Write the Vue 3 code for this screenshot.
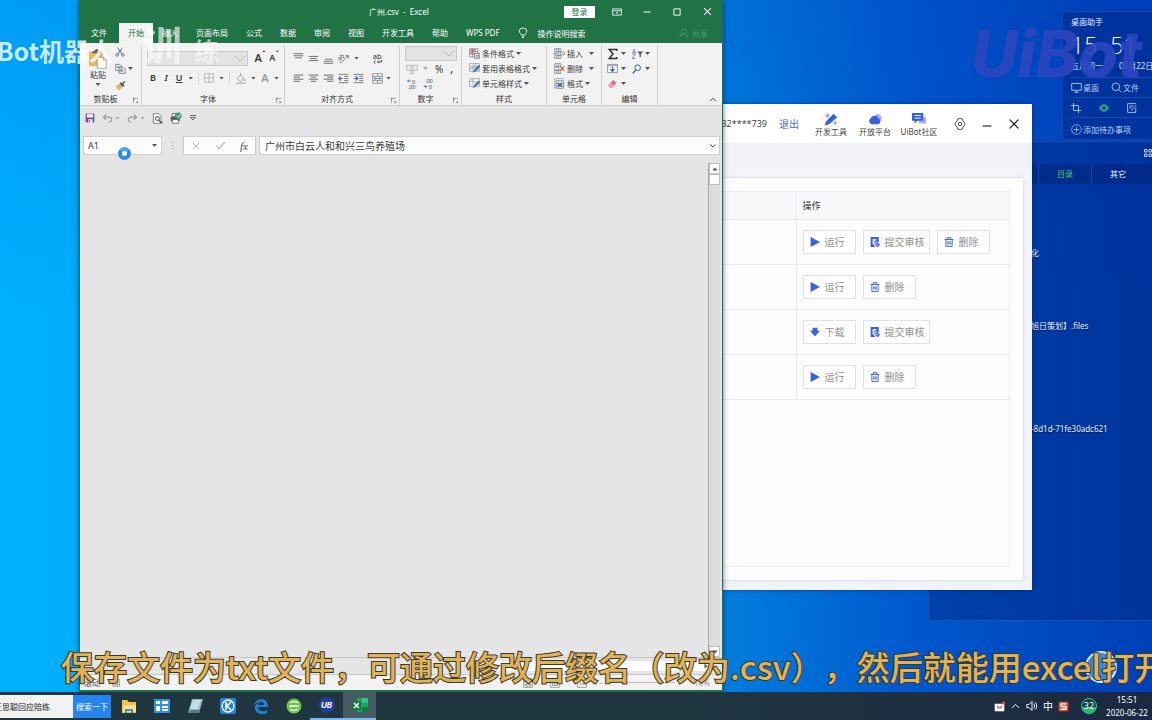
<script setup>
import { h, ref } from 'vue'

const glyphs = {
  cut: '<g fill="none" stroke="#4a5a6a" stroke-width="1.4"><path d="M4 1l7 10M12 1L5 11"/><circle cx="3.5" cy="12.5" r="2.2" stroke="#3d6aa0"/><circle cx="12.5" cy="12.5" r="2.2" stroke="#3d6aa0"/></g>',
  copy: '<g fill="#f4f4f4" stroke="#6a7785" stroke-width="1.2"><path d="M1 2h6l2 2v7H1zM6 6h6l3 3v6H6z"/><path d="M3 5h3M3 7h3M8 10h4M8 12h4"/></g>',
  brush: '<path d="M1 9l6-4 4 4-4 6c-2-1-5-3-6-6z" fill="#e0b060"/><path d="M7 5l2-2 5 5-3 2zM11 4l3-3 1 1-3 4z" fill="#555"/>',
  paste: '<rect x="1" y="4" width="20" height="21" fill="#e5b85c"/><path d="M6 6V3h3a3 3 0 0 1 6 0h3v3z" fill="#666"/><path d="M13 12h9l4 4v12H13z" fill="#fff" stroke="#888"/><path d="M22 12v4h4" fill="none" stroke="#888"/>',
  border: '<path d="M1 1h14v14H1zM8 1v14M1 8h14" fill="none" stroke="#aaa" stroke-width="1.2"/>',
  bucket: '<path d="M3 8l5-5 5 5-5 5zM8 3V0M13 8c2 2 2 4 1 4" fill="none" stroke="#999" stroke-width="1.3"/><path d="M1 14h14v2H1z" fill="#bbb"/>',
  top: '<path d="M1 1h14M1 4h14M3 7h10" stroke="#666" stroke-width="1.3"/>',
  middle: '<path d="M1 5h14M3 8h10M1 11h14" stroke="#666" stroke-width="1.3"/>',
  bottom: '<path d="M3 9h10M1 12h14M1 15h14" stroke="#666" stroke-width="1.3"/>',
  left: '<path d="M1 3h14M1 6h9M1 9h14M1 12h9" stroke="#555" stroke-width="1.2"/>',
  center: '<path d="M1 3h14M4 6h8M1 9h14M4 12h8" stroke="#555" stroke-width="1.2"/>',
  right: '<path d="M1 3h14M6 6h9M1 9h14M6 12h9" stroke="#555" stroke-width="1.2"/>',
  outdent: '<path d="M1 2h14M9 5h6M9 8h6M9 11h6M1 14h14" stroke="#666" stroke-width="1.2"/><path d="M7 8H1M4 5L1 8l3 3" fill="none" stroke="#2f6cb5" stroke-width="1.6"/>',
  indent: '<path d="M1 2h14M9 5h6M9 8h6M9 11h6M1 14h14" stroke="#666" stroke-width="1.2"/><path d="M1 8h6M4 5l3 3-3 3" fill="none" stroke="#2f6cb5" stroke-width="1.6"/>',
  orient: '<path d="M3 15L15 4M11 4h4v4" fill="none" stroke="#666" stroke-width="1.3"/><text x="0" y="9" font-size="9" fill="#444" transform="rotate(-35 5 8)">ab</text>',
  wrap: '<text x="1" y="8" font-size="11" fill="#333">ab</text><path d="M5 11a2 2 0 0 0 0 4M14 10v3H8M10 11l-2 2 2 2" fill="none" stroke="#444" stroke-width="1.3"/>',
  merge: '<path d="M1 1h14v14H1zM1 5h14M1 11h14M8 1v4M8 11v4" fill="none" stroke="#777"/><path d="M3 8h10M5 6L3 8l2 2M11 6l2 2-2 2" fill="none" stroke="#2f6cb5"/>',
  money: '<path d="M1 3h14v7H1z" fill="#eee" stroke="#aaa"/><circle cx="8" cy="6.500" r="2" fill="none" stroke="#aaa"/><path d="M5 12h6M5 14h6" stroke="#bbb" stroke-width="1.5"/>',
  decUp: '<path d="M6 3H1M3 1L1 3l2 2" fill="none" stroke="#2f6cb5" stroke-width="1.4"/><text x="8" y="8" font-size="9" fill="#444">0</text><text x="1" y="16" font-size="9" fill="#444">.00</text>',
  decDown: '<path d="M1 12h5M4 10l2 2-2 2" fill="none" stroke="#2f6cb5" stroke-width="1.4"/><text x="3" y="7" font-size="9" fill="#444">.00</text><text x="9" y="16" font-size="9" fill="#444">0</text>',
  cond: '<path d="M1 1h12v12H1zM1 5h12M1 9h12M5 1v12M9 1v12" fill="#fff" stroke="#777"/><path d="M2 2h7v2H2zM2 6h5v2H2z" fill="#c94c4c"/><path d="M8 8h7v7H8z" fill="#fff" stroke="#555"/><path d="M10 11h4M10 13h4" stroke="#555"/>',
  tableFmt: '<path d="M1 1h14v11H1zM1 5h14M1 8h14M6 1v11M10 1v11" fill="#fff" stroke="#7c8794"/><path d="M6 5h9v7H6z" fill="#a9c4e4"/><path d="M5 14l3-4 6-7 2 2-7 7z" fill="#35618f"/>',
  cellStyle: '<path d="M1 1h14v11H1zM1 5h14M6 1v11" fill="#fff" stroke="#7c8794"/><path d="M6 5h8v5H6z" fill="#c8d8ea"/><path d="M5 15l3-4 6-7 2 2-7 7z" fill="#35618f"/>',
  cellIns: '<path d="M1 1h9v4H1zM1 11h9v4H1zM4 1v4M7 1v4M4 11v4M7 11v4M6 6h9v4H6zM10 6v4" fill="#fff" stroke="#69717b"/><path d="M5 8H0M2 6L0 8l2 2" fill="none" stroke="#2f6cb5"/>',
  cellDel: '<path d="M1 1h9v4H1zM1 11h9v4H1zM4 1v4M7 1v4M4 11v4M7 11v4M1 6h6v4H1z" fill="#fff" stroke="#69717b"/><path d="M9 5l6 6M15 5l-6 6" stroke="#c8502e" stroke-width="1.7"/>',
  cellFmt: '<path d="M3 4h11v11H3zM3 8h11M3 12h11M6 4v11M11 4v11" fill="#fff" stroke="#69717b"/><path d="M6 8h5v4H6z" fill="#2f6cb5"/><path d="M1 1v14M3 1h12" stroke="#2f6cb5" stroke-dasharray="2 1"/>',
  sum: '<path d="M13 4V2H3l5 6-5 6h10v-2" fill="none" stroke="#333" stroke-width="2"/>',
  fill: '<path d="M1 2h14v12H1zM1 4h14" fill="#fff" stroke="#666"/><path d="M8 5v7M5 9l3 3 3-3" fill="none" stroke="#2f6cb5" stroke-width="2"/>',
  eraser: '<path d="M2 10l7-7 5 4-7 7H4z" fill="#e0738a"/><path d="M2 10l3-3 5 4-3 3H4z" fill="#f0a3b2"/>',
  sort: '<text x="0" y="8" font-size="9" fill="#2f5fa8">A</text><text x="0" y="16" font-size="9" fill="#8a3fa0">Z</text><path d="M8 5h8l-3 4v4h-2V9z" fill="#555"/>',
  find: '<circle cx="9" cy="6" r="4.500" fill="none" stroke="#2f5f98" stroke-width="1.6"/><path d="M6 10l-5 5" stroke="#2f5f98" stroke-width="2"/>',
  launcher: '<path d="M1 5V1h4M1 14V1h13M7 7l6 6M13 8v5H8" fill="none" stroke="#666" stroke-width="1.4"/>',
  save: '<path d="M1 1h14v14H1z" fill="#7d4a96"/><path d="M3 2h10v5H3zM5 10h7v5H5z" fill="#f2eef5"/><path d="M6 11h2v3H6z" fill="#7d4a96"/>',
  undo: '<path d="M6 2L2 6l4 4M2 6h8c6 0 5 7 0 7" fill="none" stroke="#9c9c9c" stroke-width="1.7"/>',
  redo: '<path d="M10 2l4 4-4 4M14 6H6c-6 0-5 7 0 7" fill="none" stroke="#9c9c9c" stroke-width="1.7"/>',
  preview: '<path d="M2 1h8l3 3v11H2z" fill="#fff" stroke="#555"/><circle cx="8" cy="8" r="3" fill="#e8eef5" stroke="#444" stroke-width="1.3"/><path d="M10 11l5 4" stroke="#444" stroke-width="2"/>',
  print: '<path d="M1 6h12v6H1z" fill="#556"/><path d="M3 2h8v4H3zM3 10h8v5H3z" fill="#fff" stroke="#556"/><circle cx="11" cy="5" r="4.500" fill="#3f9a6c"/><path d="M9 5l2 2 3-4" fill="none" stroke="#fff" stroke-width="1.3"/>',
  more: '<path d="M2 3h12" stroke="#444" stroke-width="1.600"/><path d="M3 7h10l-5 5z" fill="none" stroke="#444" stroke-width="1.500"/>',
  cross: '<path d="M3 3l10 10M13 3L3 13" stroke="currentColor" stroke-width="1.5"/>',
  check: '<path d="M2 8l4 5 8-10" fill="none" stroke="#b0b0b0" stroke-width="1.6"/>',
  bulb: '<path d="M5 11c0-2-3-3-3-6a6 5 0 0 1 12 0c0 3-3 4-3 6zM6 13h4M6 15h4" fill="none" stroke="#fff" stroke-width="1.300"/>',
  person: '<circle cx="8" cy="6" r="4" fill="none" stroke="currentColor" stroke-width="1.4"/><path d="M1 15c0-3 3-5 6-5M11 13h4M13 11v4" fill="none" stroke="currentColor" stroke-width="1.4"/>',
  ribbonOpt: '<path d="M1 3h14v10H1zM1 6h14" fill="none" stroke="#fff" stroke-width="1.300"/><path d="M8 12V8M6 10l2-2 2 2" fill="none" stroke="#fff"/>',
  minus: '<path d="M2 8h12" stroke="currentColor" stroke-width="1.500"/>',
  box: '<path d="M3 3h10v10H3z" fill="none" stroke="#fff" stroke-width="1.500"/>',
  up: '<path d="M3 10l5-5 5 5" fill="none" stroke="currentColor" stroke-width="1.400"/>',
  down: '<path d="M3 5l5 5 5-5" fill="none" stroke="currentColor" stroke-width="1.800"/>',
  triUp: '<path d="M3 11l5-6 5 6z" fill="#555"/>',
  triDown: '<path d="M3 5l5 6 5-6z" fill="#555"/>',
  triRight: '<path d="M5 3l6 5-6 5z" fill="#555"/>',
  grid: '<path d="M1 1h14v14H1zM1 6h14M1 11h14M6 1v14M11 1v14" fill="none" stroke="#777"/>',
  page: '<path d="M1 1h14v14H1zM4 4h8v8H4zM6 6h4M6 8h4M6 10h4" fill="none" stroke="#777"/>',
  pageBreak: '<path d="M1 1h14v14H1zM5 1v9h6V1" fill="none" stroke="#777"/>',
  tools: '<path d="M1 15l1-4 9-9 4 4-9 8z" fill="#3a62d8"/><path d="M1 4l3-3 3 3-3 3zM10 12l3-2 2 3-2 2z" fill="#9fb5f3"/>',
  cloud: '<path d="M8 4a4 4 0 0 1 7 1c2 4 0 6-3 6z" fill="#9fb5f3"/><path d="M4 14a4 4 0 0 1-1-7 5 5 0 0 1 9 0 4 4 0 0 1 0 7z" fill="#3a62d8"/>',
  chat: '<path d="M10 6h6v8l-2-1H8v-3z" fill="#9fb5f3"/><path d="M0 1h13v9H6l-3 3v-3H0z" fill="#3a62d8"/><path d="M3 4h7M3 7h7" stroke="#fff"/>',
  gear: '<path d="M5 1h6l1 3 3 4-3 4-1 3H5l-1-3-3-4 3-4z" fill="none" stroke="#555" stroke-width="1.300" stroke-linejoin="round"/><circle cx="8" cy="8" r="2.500" fill="none" stroke="#555" stroke-width="1.300"/>',
  play: '<path d="M1 0l15 8-15 8z" fill="#3a62e0"/>',
  download: '<path d="M4 1h8v5h4l-8 9-8-9h4z" fill="#3a62e0"/>',
  submit: '<path d="M1 0h13v8a4 4 0 0 0-5 8H1z" fill="#3a62c8"/><path d="M4 3h7L7 8v4H4z" fill="#cfdcfa"/><circle cx="12" cy="12" r="3.500" fill="#3a62c8"/><path d="M10 12l2 1 2-3" fill="none" stroke="#fff"/>',
  trash: '<path d="M1 4h14M5 4V1h6v3M3 4v11h10V4M6 7v5M8 7v5M10 7v5" fill="none" stroke="#3a62c8" stroke-width="1.500"/>',
  monitor: '<path d="M1 2h14v10H1zM5 15h6M8 12v3" fill="none" stroke="currentColor" stroke-width="1.300"/>',
  search: '<circle cx="7" cy="7" r="5.500" fill="none" stroke="currentColor" stroke-width="1.300"/><path d="M11 11l4 4" stroke="currentColor" stroke-width="1.400"/>',
  crop: '<path d="M4 0v12h12M0 4h12v12" fill="none" stroke="currentColor" stroke-width="1.400"/>',
  eye: '<path d="M0 8c4-8 12-8 16 0-4 8-12 8-16 0z" fill="#2f9d87"/><circle cx="8" cy="8" r="2.500" fill="#0a3f96"/>',
  note: '<path d="M14 8v7H1V1h13M4 5h6M4 8h3M7 12l8-9" fill="none" stroke="currentColor" stroke-width="1.400"/>',
  plus: '<circle cx="8" cy="8" r="7" fill="none" stroke="currentColor"/><path d="M4 8h8M8 4v8" stroke="currentColor"/>',
  tiles: '<path d="M1 1h5v5H1zM10 1h5v5h-5zM1 10h5v5H1zM10 10h5v5h-5z" fill="none" stroke="#d8e4ff" stroke-width="1.800"/>',
  folder: '<path d="M1 2h5l2 2h7v11H1z" fill="#f3c14b"/><path d="M2 7h13v7H2z" fill="#ffe08a"/><path d="M4 11h8v4h-2v-2H6v2H4z" fill="#3b93d6"/>',
  list: '<path d="M0 1h16v14H0z" fill="#2b95e6"/><path d="M2 3h4v3H2zM8 3h6v3H8zM2 8h4v5H2zM8 8h6v2H8zM8 11h6v2H8z" fill="#fff"/>',
  book: '<path d="M5 1h11l-4 14H1z" fill="#8fb6bd"/><path d="M6 2h8l-3 9H3z" fill="#c5dde0"/><path d="M1 15l3-3h9l-1 3z" fill="#557c86"/>',
  kugou: '<rect width="16" height="16" rx="2" fill="#2383d8"/><circle cx="8" cy="8" r="6" fill="none" stroke="#fff" stroke-width="1.300"/><path d="M6 4v8M11 4L7 8l4 4" fill="none" stroke="#fff" stroke-width="1.600"/>',
  edge: '<path d="M1 8C2-1 15-1 15 8v1H5c0 5 6 5 9 3v3C7 18 1 14 2 9c1-3 3-5 6-5-2 1-3 2-3 3h6c0-5-8-4-10 1z" fill="#1e82d6"/>',
  green: '<circle cx="8" cy="8" r="7.500" fill="#6cc644"/><path d="M3 8h10M4 5c2-2 6-2 8 0M4 11c2 2 6 2 8 0" fill="none" stroke="#fff" stroke-width="1.600"/>',
  excel: '<path d="M5 1h11v14H5z" fill="#21a366"/><path d="M10 1h6v5h-6z" fill="#33c481"/><path d="M10 10h6v5h-6z" fill="#107c41"/><path d="M0 4h9v9H0z" fill="#107c41"/><path d="M2 6l5 5M7 6l-5 5" stroke="#fff" stroke-width="1.500"/>',
  bag: '<path d="M1 4h14v11H1z" fill="#fff"/><path d="M12 1h4v4h-4z" fill="#e5473c"/><path d="M5 7c0 4 6 4 6 0" fill="none" stroke="#e5473c" stroke-width="1.600"/>',
  sound: '<path d="M1 6h3l4-4v12l-4-4H1zM10 5c2 2 2 4 0 6M12 3c3 3 3 7 0 10" fill="none" stroke="#fff" stroke-width="1.200"/>',
  sogou: '<rect x="1" y="1" width="14" height="14" rx="2" fill="#e8512e"/><path d="M12 4H6c-3 0-2 4 0 4h4c3 0 2 4 0 4H4" fill="none" stroke="#fff" stroke-width="2"/>',
}
const Icon = (p) =>
  h('svg', { viewBox: p.box || '0 0 16 16', innerHTML: glyphs[p.n], 'aria-hidden': 'true' })
Icon.props = ['n', 'box']

const tabs = ['文件', '开始', '插入', '页面布局', '公式', '数据', '审阅', '视图', '开发工具', '帮助', 'WPS PDF']
const styleItems = [['cond', '条件格式'], ['tableFmt', '套用表格格式'], ['cellStyle', '单元格样式']]
const cellItems = [['cellIns', '插入'], ['cellDel', '删除'], ['cellFmt', '格式']]
const run = ['play', '运行']
const del = ['trash', '删除']
const sub = ['submit', '提交审核']
const rows = [[run, sub, del], [run, del], [['download', '下载'], sub], [run, del]]
const apps = ['folder', 'list', 'book', 'kugou', 'edge', 'green']
const cell = ref('A1')
const formula = ref('广州市白云人和和兴三鸟养殖场')
const query = ref('王思聪回应陪练')
</script>

<template>
  <div class="screen">
    <main class="desktop">
      <aside class="panel">
        <div class="panel-top"><Icon n="tiles" class="i8" /></div>
        <nav class="panel-tabs"><a href="#" class="on">目录</a><a href="#">其它</a></nav>
        <ul class="files">
          <li>化</li>
          <li>旭日策划】.files</li>
          <li>-8d1d-71fe30adc621</li>
        </ul>
      </aside>

      <aside class="helper">
        <h2>桌面助手</h2>
        <div class="clock"><span>15</span><span>51</span></div>
        <div class="date"><span>五月初一</span><span>06月22日</span></div>
        <div class="tools"><a href="#"><Icon n="monitor" class="i11" />桌面</a><a href="#"><Icon n="search" class="i11" />文件</a></div>
        <div class="tools icons"><Icon n="crop" class="i10" /><Icon n="eye" class="i10" /><Icon n="note" class="i10" /></div>
        <a href="#" class="todo"><Icon n="plus" class="i11" />添加待办事项</a>
      </aside>

      <div class="brand">UiBot</div>

      <section class="uibot">
        <header>
          <span class="phone">132****739</span>
          <a href="#" class="logout">退出</a>
          <a href="#" class="link"><Icon n="tools" class="i14" />开发工具</a>
          <a href="#" class="link"><Icon n="cloud" class="i14" />开放平台</a>
          <a href="#" class="link"><Icon n="chat" class="i14" />UiBot社区</a>
          <button class="wb" aria-label="设置"><Icon n="gear" class="i12" /></button>
          <button class="wb low" aria-label="最小化"><Icon n="minus" class="i12" /></button>
          <button class="wb" aria-label="关闭"><Icon n="cross" class="i14" /></button>
        </header>
        <div class="card">
          <div class="frame">
            <table>
              <thead><tr><th></th><th class="op">操作</th></tr></thead>
              <tbody>
                <tr v-for="(r, i) in rows" :key="i">
                  <td></td>
                  <td class="op"><div class="acts"><button v-for="a in r" :key="a[1]" :class="{ wide: a[1].length > 2 }"><Icon :n="a[0]" class="i10" />{{ a[1] }}</button></div></td>
                </tr>
              </tbody>
            </table>
          </div>
        </div>
      </section>

      <section class="excel">
        <header class="title">
          <h1>广州.csv&nbsp; -&nbsp; Excel</h1>
          <button class="login">登录</button>
          <button class="tb" aria-label="功能区选项"><Icon n="ribbonOpt" class="i10" /></button>
          <button class="tb" aria-label="最小化"><Icon n="minus" class="i10" /></button>
          <button class="tb" aria-label="最大化"><Icon n="box" class="i10" /></button>
          <button class="tb" aria-label="关闭"><Icon n="cross" class="i11" /></button>
        </header>
        <nav class="tabs">
          <a v-for="t in tabs" :key="t" href="#" :class="{ on: t === '开始' }">{{ t }}</a>
          <a href="#" class="tell"><Icon n="bulb" class="i10" />操作说明搜索</a>
          <a href="#" class="share"><Icon n="person" class="i10" />共享</a>
        </nav>
        <div class="ribbon">
          <div class="group">
            <div class="gb clip">
              <button class="paste"><Icon n="paste" box="0 0 28 29" class="i20" />粘贴<i class="caret"></i></button>
              <div class="col"><Icon n="cut" class="i10" /><span class="pair"><Icon n="copy" class="i11" /><i class="caret"></i></span><Icon n="brush" class="i11" /></div>
            </div>
            <div class="gl">剪贴板<Icon n="launcher" class="launch" /></div>
          </div>
          <div class="group">
            <div class="gb two">
              <div class="line"><select class="fname" aria-label="字体"><option></option></select><select class="fsize" aria-label="字号"><option></option></select><b class="big">A<sup>ˆ</sup></b><b class="small">A<sup>ˇ</sup></b></div>
              <div class="line fmt"><b>B</b><b class="it">I</b><b class="un">U</b><i class="caret"></i><s></s><Icon n="border" class="i10" /><i class="caret"></i><s></s><Icon n="bucket" class="i11" /><i class="caret"></i><b class="grey">A</b><i class="caret"></i></div>
            </div>
            <div class="gl">字体<Icon n="launcher" class="launch" /></div>
          </div>
          <div class="group">
            <div class="gb align">
              <Icon n="top" class="i11" /><Icon n="middle" class="i11" /><Icon n="bottom" class="i11" /><Icon n="orient" class="i11" /><i class="caret"></i><Icon n="wrap" class="i11" /><i></i>
              <Icon n="left" class="i11" /><Icon n="center" class="i11" /><Icon n="right" class="i11" /><Icon n="outdent" class="i11" /><Icon n="indent" class="i11" /><Icon n="merge" class="i11" /><i class="caret"></i>
            </div>
            <div class="gl">对齐方式<Icon n="launcher" class="launch" /></div>
          </div>
          <div class="group">
            <div class="gb num">
              <select class="nfmt" aria-label="数字格式"><option></option></select>
              <div class="line"><Icon n="money" class="i12" /><i class="caret pale"></i><span class="pct">%</span><b>,</b></div>
              <div class="line dec"><Icon n="decUp" class="i10" /><Icon n="decDown" class="i10" /></div>
            </div>
            <div class="gl">数字<Icon n="launcher" class="launch" /></div>
          </div>
          <div class="group">
            <div class="gb list"><button v-for="s in styleItems" :key="s[1]"><Icon :n="s[0]" class="i11" />{{ s[1] }}<i class="caret"></i></button></div>
            <div class="gl plain">样式</div>
          </div>
          <div class="group">
            <div class="gb list cells"><button v-for="s in cellItems" :key="s[1]"><Icon :n="s[0]" class="i11" />{{ s[1] }}<i class="caret"></i></button></div>
            <div class="gl plain">单元格</div>
          </div>
          <div class="group">
            <div class="gb edit"><Icon n="sum" class="i12" /><i class="caret"></i><Icon n="sort" class="i11" /><i class="caret"></i><Icon n="fill" class="i11" /><i class="caret"></i><Icon n="find" class="i10" /><i class="caret"></i><Icon n="eraser" class="i11" /><i class="caret"></i></div>
            <div class="gl plain">编辑</div>
          </div>
          <div class="group last"><button aria-label="折叠功能区"><Icon n="up" class="i10" /></button></div>
        </div>
        <div class="quick">
          <Icon n="save" class="i10" /><span class="pair"><Icon n="undo" class="i11" /><i class="caret pale"></i></span><span class="pair"><Icon n="redo" class="i11" /><i class="caret pale"></i></span><Icon n="preview" class="i11" /><Icon n="print" class="i12" /><Icon n="more" class="i8" />
        </div>
        <div class="fbar">
          <label class="name"><input v-model="cell" aria-label="名称框" /><i class="caret"></i></label>
          <span class="dots">⋮</span>
          <div class="fx"><Icon n="cross" class="i10" /><Icon n="check" class="i11" /><em>fx</em></div>
          <label class="formula"><input v-model="formula" aria-label="编辑栏" /><Icon n="down" class="i8" /></label>
        </div>
        <div class="sheet">
          <div class="vbar"><span><Icon n="triUp" class="i8" /></span><span></span><span class="end"><Icon n="triDown" class="i8" /></span></div>
        </div>
        <div class="hrow"><div class="hbar"><Icon n="triRight" class="i8" /></div></div>
        <footer><span>滚动</span><Icon n="grid" class="i8" /><span class="views"><Icon n="grid" class="i10" /><Icon n="page" class="i10" /><Icon n="pageBreak" class="i10" /></span><span class="zoom">−<u></u>+</span><span class="pc">10%</span></footer>
      </section>

      <div class="ball"></div>
      <div class="busy"></div>
      <div class="mark">UiBot机器人<span class="w1">训</span><span class="w2">练</span></div>
      <p class="caption">保存文件为txt文件，可通过修改后缀名（改为.csv），然后就能用excel打开</p>
    </main>

    <footer class="taskbar">
      <input v-model="query" class="q" aria-label="搜索" />
      <button class="go">搜索一下</button>
      <button v-for="a in apps" :key="a" class="app" :aria-label="a"><Icon :n="a" class="i16" /></button>
      <button class="app open"><span class="ub">UB</span></button>
      <button class="app open active" aria-label="Excel"><Icon n="excel" class="i16" /></button>
      <div class="tray">
        <Icon n="bag" class="i11" /><Icon n="up" class="i11" /><Icon n="sound" class="i12" /><span>中</span><Icon n="sogou" class="i11" /><span class="temp">32</span>
        <time>15:51<br />2020-06-22</time>
      </div>
    </footer>
  </div>
</template>

<style>
html, body { margin: 0; background: #1d3040; }
</style>

<style scoped>
.screen { min-height: 100vh; display: flex; flex-direction: column; overflow: hidden; font: 8px/12px "Noto Sans", "Noto Sans CJK SC", sans-serif; color: #333; }
.screen *, .screen *::before { box-sizing: border-box; }
a { color: inherit; text-decoration: none; }
button { font: inherit; color: inherit; background: none; border: 0; padding: 0; display: flex; align-items: center; justify-content: center; }
input { font: inherit; color: inherit; border: 0; background: none; padding: 0; min-width: 0; outline: none; }
svg { display: block; flex: none; width: 12px; height: 12px; overflow: visible; }
.i8 { width: 8px; height: 8px; } .i10 { width: 10px; height: 10px; } .i11 { width: 11px; height: 11px; }
.i12 { width: 12px; height: 12px; } .i14 { width: 14px; height: 14px; } .i16 { width: 16px; height: 16px; } .i20 { width: 20px; height: 20px; }
.caret { flex: none; width: 5px; height: 3px; background: #555; clip-path: polygon(0 0, 100% 0, 50% 100%); }
.caret.pale { background: #aaa; }
.pair { display: flex; align-items: center; gap: 2px; }

.desktop { flex: 1; position: relative; overflow: hidden; background: linear-gradient(180deg, rgba(0, 40, 180, .14), transparent 45%), linear-gradient(90deg, #00b0ff 0%, #00a4f4 30%, #007bdc 64%, #0057cc 80%, #0046bc 93%, #0040b6 100%); }

.panel { position: absolute; left: 928px; right: 0; top: 141px; height: 480px; background: rgba(0, 34, 120, .4); border: 1px solid rgba(70, 120, 210, .35); border-right: 0; color: #e8f0ff; }
.panel-top { height: 22px; display: flex; justify-content: flex-end; align-items: center; }
.panel-tabs { height: 20px; padding-left: 109px; display: flex; background: rgba(0, 25, 100, .35); font-size: 8px; }
.panel-tabs a { width: 53px; text-align: center; line-height: 20px; border-left: 1px solid rgba(60, 110, 200, .4); }
.panel-tabs .on { color: #4fc25a; }
.files { list-style: none; margin: 0; padding: 63px 0 0 102px; white-space: nowrap; }
.files li { line-height: 12px; text-shadow: 0 1px 1px #001a50; }
.files li + li { margin-top: 61px; }
.files li + li + li { margin-top: 91px; }

.helper { position: absolute; left: 1062px; right: 0; top: 11px; height: 129px; padding: 4px 0 0 8px; background: rgba(0, 44, 145, .65); border: 1px solid rgba(60, 110, 200, .35); border-right: 0; color: #b9ccf2; overflow: hidden; white-space: nowrap; }
.helper h2 { margin: 0; font: inherit; color: #e6eeff; }
.clock { display: flex; gap: 13px; font: 23px/34px "Open Sans", sans-serif; font-weight: 300; color: #fff; height: 32px; }
.date { display: flex; gap: 16px; color: #dce6ff; height: 17px; line-height: 12px; }
.tools { display: flex; gap: 12px; height: 20px; align-items: center; border-top: 1px solid rgba(70, 120, 210, .35); }
.tools a, .todo { display: flex; align-items: center; gap: 1px; }
.tools.icons { gap: 18px; }
.todo { height: 24px; border-top: 1px solid rgba(70, 120, 210, .35); }
.brand { position: absolute; left: 971px; top: 18px; font: italic 800 64px/72px Inter, "Open Sans", sans-serif; color: #2c46c0; opacity: .9; }

.uibot { position: absolute; left: 480px; width: 552px; top: 104px; height: 486px; background: #f1f3f7; display: flex; flex-direction: column; box-shadow: 0 0 4px rgba(0, 20, 80, .5); }
.uibot header { height: 40px; background: #fff; display: flex; justify-content: flex-end; align-items: center; padding-right: 11px; color: #444; }
.phone { font-size: 9px; margin-right: 12px; }
.logout { font-size: 10px; color: #4c70bf; margin-right: 10px; }
.link { width: 44px; display: flex; flex-direction: column; align-items: center; font-size: 8px; white-space: nowrap; padding-top: 2px; }
.wb { width: 14px; height: 20px; margin-left: 13px; color: #222; }
.wb:first-of-type { margin-left: 12px; }
.wb.low { padding-top: 4px; }
.card { flex: 1; margin: 35px 9px 10px 0; padding: 13px 13px; background: #fdfdfe; box-shadow: 0 0 3px rgba(50, 60, 100, .2); }
.frame { height: 376px; border: 1px solid #eceef2; }
table { width: 100%; border-collapse: collapse; table-layout: fixed; }
th, td { padding: 0 6px; text-align: left; border-bottom: 1px solid #e9ebf0; font-weight: 400; }
th { height: 27px; padding-top: 2px; background: #f8f9fb; font-size: 9px; }
td { height: 45px; }
.op { width: 213px; border-left: 1px solid #e9ebf0; }
.acts { display: flex; gap: 7px; }
.acts button { width: 53px; height: 24px; padding-left: 6px; justify-content: flex-start; border: 1px solid #e0e2ea; gap: 5px; font-size: 10px; color: #929292; background: #fff; white-space: nowrap; }
.acts .wide { width: 67px; }

.excel { position: absolute; left: 79px; width: 644px; top: 0; bottom: 0; background: #e5e5e5; display: flex; flex-direction: column; border: 1px solid #21734a; border-top: 0; box-shadow: 0 0 5px rgba(0, 20, 60, .6); color: #3a3a3a; }
.title { height: 23px; background: #217346; color: #fff; display: flex; align-items: center; }
.title h1 { flex: 1; margin: 0; padding-left: 289px; font: inherit; white-space: nowrap; }
.login { width: 31px; height: 12px; margin-right: 7px; background: #fff; color: #217346; }
.tb { width: 30px; height: 20px; }
.tabs { height: 20px; background: #217346; color: #fff; display: flex; padding-left: 2px; line-height: 19px; white-space: nowrap; }
.tabs a { padding: 0 9px; }
.tabs a:first-child { margin-right: 3px; }
.tabs a.on { background: #f2f2f2; color: #217346; }
.tabs .tell { display: flex; align-items: center; gap: 10px; }
.tabs .share { margin-left: auto; padding-right: 14px; display: flex; align-items: center; gap: 3px; color: #4d9a70; }
.ribbon { height: 63px; background: #f2f2f2; border-bottom: 1px solid #d0d0d0; display: grid; grid-template-columns: 62px 143px 115px 62px 85px 55px 56px 1fr; }
.group { display: flex; flex-direction: column; margin: 3px 0; border-right: 1px solid #cfcfcf; }
.gb { height: 46px; padding: 0 5px; }
.gl { position: relative; height: 13px; line-height: 13px; text-align: center; padding-right: 10px; color: #333; }
.gl.plain { padding-right: 0; }
.launch { position: absolute; right: 2px; top: 6px; width: 6px; height: 6px; }
.clip { display: flex; gap: 7px; padding-left: 8px; }
.paste { flex-direction: column; justify-content: flex-start; padding-top: 3px; }
.paste .caret { margin-top: 2px; }
.col { display: flex; flex-direction: column; justify-content: space-between; padding: 1px 0; }
.two { display: flex; flex-direction: column; gap: 4px; padding-top: 4px; }
.line { display: flex; align-items: center; height: 16px; }
select { appearance: none; height: 15px; border: 1px solid #c9c9c9; border-radius: 0; background: #e3e3e3; padding: 0; font: inherit; }
.fname { width: 71px; }
.fsize { width: 32px; border-left: 0; margin-right: 7px; }
.fsize, .nfmt { background: linear-gradient(-45deg, transparent 46%, #bbb 46%, #bbb 56%, transparent 56%) right 2px top 4px / 5px 5px no-repeat, linear-gradient(45deg, transparent 46%, #bbb 46%, #bbb 56%, transparent 56%) right 7px top 4px / 5px 5px no-repeat, #e3e3e3; }
.big { font-size: 11px; width: 15px; } .small { font-size: 9px; }
b { font-weight: 600; }
sup { font-size: 8px; line-height: 0; }
.fmt { gap: 5px; padding-left: 2px; font-size: 9px; }
.fmt b { width: 10px; text-align: center; }
.it { font-style: italic; } .un { text-decoration: underline; } .fmt .grey { color: #999; font-size: 11px; }
.fmt s { width: 1px; height: 13px; background: #d5d5d5; }
.align { display: grid; grid-template-columns: repeat(3, 14px) 14px 18px 12px 7px; grid-template-rows: 20px 20px; align-items: center; padding: 2px 0 0 8px; column-gap: 1px; }
.align .caret { margin-left: 1px; }
.num { display: flex; flex-direction: column; }
.nfmt { width: 52px; min-height: 15px; }
.num .line { height: 15px; gap: 5px; font-size: 10px; padding-left: 1px; }
.num .dec { gap: 6px; padding-left: 2px; }
.pct { margin-left: 2px; margin-right: 2px; }
.list { display: flex; flex-direction: column; padding-left: 7px; }
.list button { height: 15px; justify-content: flex-start; gap: 2px; white-space: nowrap; }
.cells button:nth-child(-n+2) .caret { margin-left: 4px; }
.edit { display: grid; grid-template-columns: 13px 10px 12px 5px; grid-auto-rows: 15px; align-items: center; column-gap: 1px; }
.group.last { border: 0; align-items: flex-end; justify-content: flex-end; padding-right: 4px; }
.quick { height: 24px; display: flex; align-items: center; gap: 7px; padding-left: 5px; }
.fbar { height: 31px; padding: 6px 2px 6px 3px; display: flex; gap: 3px; font-size: 9px; }
.name, .fx, .formula { display: flex; align-items: center; background: #fdfdfd; border: 1px solid #cfcfcf; height: 19px; }
.name { width: 79px; padding: 0 4px; }
.name input, .formula input { flex: 1; }
.dots { width: 15px; text-align: center; line-height: 19px; color: #999; }
.fx { width: 73px; justify-content: space-around; color: #b0b0b0; }
.fx em { color: #444; font-family: "Liberation Serif", serif; font-size: 11px; }
.formula { flex: 1; padding: 0 2px 0 5px; font-size: 10px; }
.sheet { flex: 1; display: flex; justify-content: flex-end; padding: 2px 2px 0 0; }
.vbar { width: 12px; border-left: 1px solid #aaa; background: #dcdcdc; display: flex; flex-direction: column; }
.vbar span { height: 11px; background: #fff; border: 1px solid #c0c0c0; display: flex; align-items: center; justify-content: center; }
.vbar .end { margin-top: auto; }
.hrow { height: 18px; border: 1px solid #c8c8c8; border-width: 1px 0; padding: 3px 12px 3px 390px; }
.hbar { height: 10px; background: #fff; display: flex; justify-content: flex-end; align-items: center; }
.excel > footer { height: 16px; background: #f2f2f2; display: flex; align-items: center; gap: 12px; padding: 0 12px 0 4px; border-bottom: 1px solid #217346; color: #555; }
.views { margin-left: auto; display: flex; gap: 17px; }
.zoom { display: flex; align-items: center; gap: 3px; color: #999; }
.zoom u { width: 68px; height: 1px; background: #bbb; }
.pc { color: #999; }

.ball { position: absolute; left: 1085px; top: 651px; width: 32px; height: 32px; border-radius: 50%; border: 2px solid #d4eaff; background: #3e88dc; }
.busy { position: absolute; left: 118px; top: 147px; width: 13px; height: 13px; border-radius: 50%; border: 4px solid #2e8bdf; border-top-color: #45a8ef; background: #fff; }
.mark { position: absolute; right: calc(100% - 219px); top: 31px; height: 38px; display: flex; align-items: center; font: 700 25px/38px "Noto Sans CJK SC", sans-serif; color: rgba(255, 255, 255, .78); white-space: nowrap; }
.w1 { font-size: 40px; line-height: 24px; align-self: flex-start; margin-left: 28px; opacity: .8; }
.w2 { margin-left: 12px; opacity: .8; }
.caption { position: absolute; left: 61px; top: 642px; margin: 0; font: 500 33px/48px "Noto Sans CJK SC", sans-serif; text-spacing-trim: space-all; color: #e0b356; white-space: nowrap; -webkit-text-stroke: 2px #39382d; paint-order: stroke fill; }

.taskbar { height: 28px; display: flex; align-items: stretch; background: linear-gradient(90deg, #20363f, #1f3540 60%, #1b2942); color: #fff; }
.q { width: 73px; margin: 3px 0 2px; background: #f2f2f2; color: #222; text-indent: -6px; }
.go { width: 38px; margin: 3px 1px 2px 0; background: #2684f0; }
.app { width: 33px; }
.open { border-bottom: 2px solid #76b9ed; }
.active { background: #455b64; }
.ub { width: 16px; height: 16px; border-radius: 50%; background: #233d9e; font: italic 700 8px/16px Inter, sans-serif; }
.tray { margin-left: auto; display: flex; align-items: center; gap: 5px; }
.tray span { font-size: 10px; }
.tray .i11 + .temp { margin-left: 7px; }
.tray .temp { width: 16px; height: 16px; border-radius: 50%; border: 1px solid #32c88a; background: linear-gradient(#193b45 55%, #20b873 55%); font-size: 9px; line-height: 14px; text-align: center; }
time { width: 50px; text-align: center; line-height: 13px; white-space: nowrap; }
</style>
